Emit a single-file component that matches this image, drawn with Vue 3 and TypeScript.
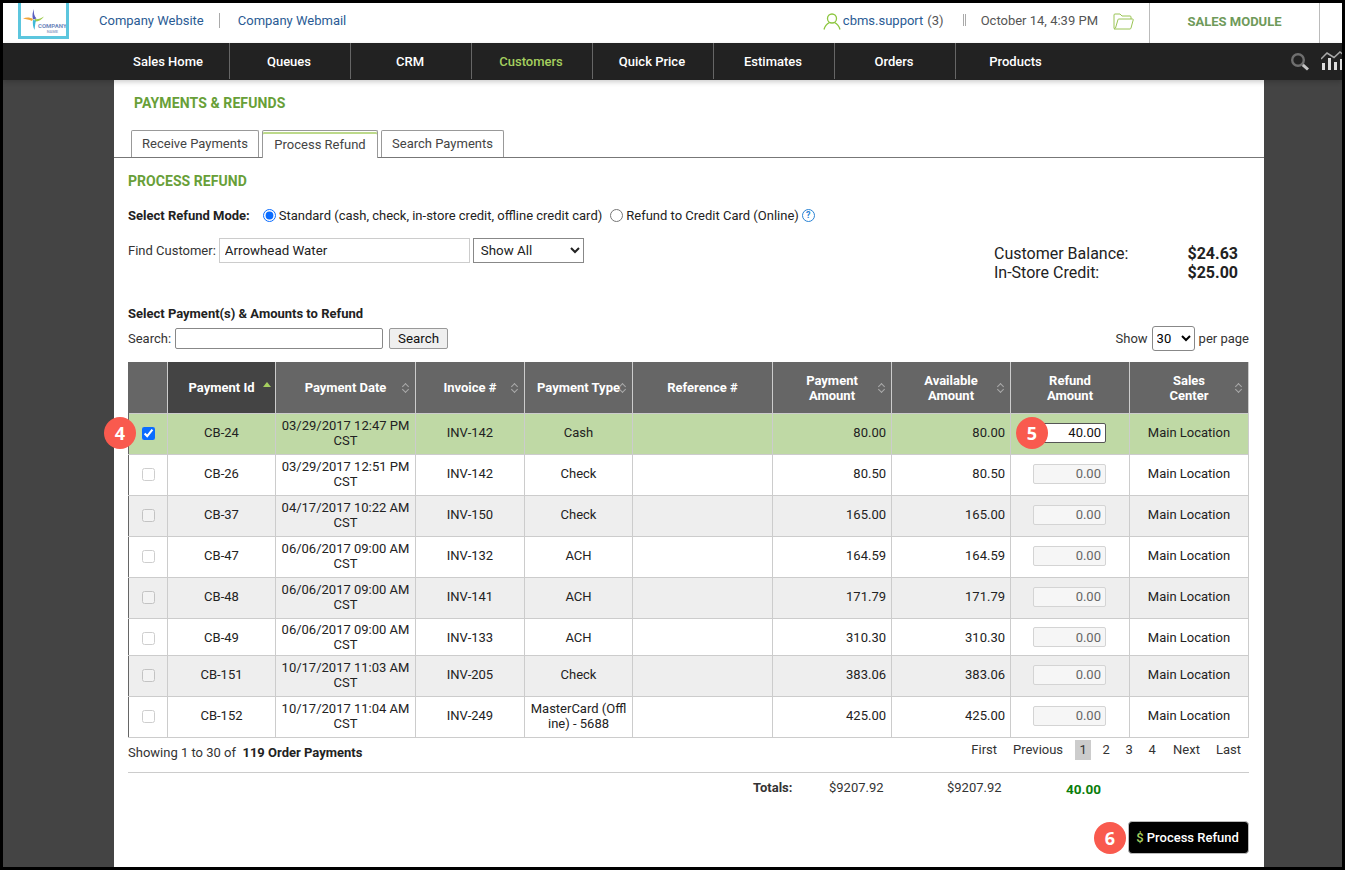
<script setup lang="ts">
interface Row {
  id: string
  date: string
  inv: string
  type: string
  amount: string
  short?: boolean
}
const nav: string[] = ['Sales Home', 'Queues', 'CRM', 'Customers', 'Quick Price', 'Estimates', 'Orders', 'Products']
const rows: Row[] = [
  { id: 'CB-24', date: '03/29/2017 12:47 PM CST', inv: 'INV-142', type: 'Cash', amount: '80.00' },
  { id: 'CB-26', date: '03/29/2017 12:51 PM CST', inv: 'INV-142', type: 'Check', amount: '80.50' },
  { id: 'CB-37', date: '04/17/2017 10:22 AM CST', inv: 'INV-150', type: 'Check', amount: '165.00' },
  { id: 'CB-47', date: '06/06/2017 09:00 AM CST', inv: 'INV-132', type: 'ACH', amount: '164.59' },
  { id: 'CB-48', date: '06/06/2017 09:00 AM CST', inv: 'INV-141', type: 'ACH', amount: '171.79' },
  { id: 'CB-49', date: '06/06/2017 09:00 AM CST', inv: 'INV-133', type: 'ACH', amount: '310.30', short: true },
  { id: 'CB-151', date: '10/17/2017 11:03 AM CST', inv: 'INV-205', type: 'Check', amount: '383.06' },
  { id: 'CB-152', date: '10/17/2017 11:04 AM CST', inv: 'INV-249', type: 'MasterCard (Offl ine) - 5688', amount: '425.00' },
]
const pages: string[] = ['1', '2', '3', '4']
</script>

<template>
  <div class="frame">
    <header class="top">
      <div class="logo">
        <svg width="22" height="22" viewBox="0 0 22 22" class="logo-mark">
          <path d="M11 0 C10.500 4 11 7 13.500 9.500 L10 10.500 C9 7 9.500 3 11 0 Z" fill="#5a5fc0" />
          <path d="M0 9.500 C3 8 7 8 10 10 L9 12 C6 10.500 3 10 0 9.500 Z" fill="#f2a63c" />
          <path d="M21 7.500 C18 9.500 15 10.500 11.500 10 L12 12.500 C15.500 12.500 19 10.500 21 7.500 Z" fill="#9ccb4a" />
          <path d="M10 11 L13 11.500 C12 15 12 18 11.500 21 C10 18 9.500 14.500 10 11 Z" fill="#3fb8d8" />
        </svg>
        <span class="logo-text">COMPANY<br /><small>NAME</small></span>
      </div>
      <a class="link first">Company Website</a>
      <span class="vsep"></span>
      <a class="link">Company Webmail</a>
      <div class="top-right">
        <svg class="user" width="18" height="17" viewBox="0 0 18 17" fill="none" stroke="#8cc63f" stroke-width="1.300">
          <circle cx="9" cy="5.500" r="4.500" />
          <path d="M1 16.500 C2 12.500 4.500 10.500 6.500 9.500 M17 16.500 C16 12.500 13.500 10.500 11.500 9.500" />
        </svg>
        <a class="link user-name">cbms.support</a>
        <span class="count">(3)</span>
        <span class="dbl"></span>
        <span class="when">October 14, 4:39 PM</span>
        <svg class="folder" width="21" height="17" viewBox="0 0 21 17" fill="none" stroke="#9ac455" stroke-width="1">
          <path d="M1 15.500 V2 Q1 1 2 1 H7 L9 3 H17 Q18 3 18 4 V6" />
          <path d="M1 15.500 Q2 15.500 2.500 15 L5 6.500 Q5 6 6 6 H19.500 Q20.500 6 20.200 7 L18 15 Q17.800 16 17 16 H1" />
        </svg>
        <div class="module">SALES MODULE</div>
      </div>
    </header>

    <nav class="nav">
      <a v-for="(n, i) in nav" :key="n" class="nav-item" :class="{ active: i === 3 }">{{ n }}</a>
      <div class="nav-icons">
        <svg width="20" height="20" viewBox="0 0 20 20" fill="none" class="ic-search">
          <circle cx="8" cy="8" r="5.800" stroke="#6f6f6f" stroke-width="2.400" />
          <path d="M12.800 12.800 L18 17.500" stroke="#c4c4c4" stroke-width="3" />
        </svg>
        <svg width="24" height="20" viewBox="0 0 24 20" class="ic-chart">
          <path d="M0 8 L6 2 L13 6.500 L19 1 L24 5" fill="none" stroke="#a8a8a8" stroke-width="1.500" />
          <rect x="1" y="12" width="3" height="7" fill="#ddd" />
          <rect x="7" y="7" width="3" height="12" fill="#ddd" />
          <rect x="13" y="11" width="3" height="8" fill="#ddd" />
          <rect x="19" y="8" width="3" height="11" fill="#ddd" />
        </svg>
      </div>
    </nav>

    <main class="page">
      <h1 class="title">PAYMENTS &amp; REFUNDS</h1>
      <div class="tabs">
        <a class="tab">Receive Payments</a>
        <a class="tab on">Process Refund</a>
        <a class="tab">Search Payments</a>
      </div>

      <section class="body">
        <h2 class="sub">PROCESS REFUND</h2>
        <div class="mode">
          <b class="mode-label">Select Refund Mode:</b>
          <input type="radio" name="mode" class="radio" checked />
          <span>Standard (cash, check, in-store credit, offline credit card)</span>
          <input type="radio" name="mode" class="radio second" />
          <span>Refund to Credit Card (Online)</span>
          <span class="help">?</span>
        </div>

        <div class="find">
          <div class="find-left">
            <label>Find Customer:</label>
            <input class="cust" value="Arrowhead Water" />
            <select class="showall"><option>Show All</option></select>
          </div>
          <div class="balance">
            <div class="bal-row"><span>Customer Balance:</span><b>$24.63</b></div>
            <div class="bal-row"><span>In-Store Credit:</span><b>$25.00</b></div>
          </div>
        </div>

        <b class="select-label">Select Payment(s) &amp; Amounts to Refund</b>
        <div class="searchbar">
          <div class="searchbar-left">
            <label>Search:</label>
            <input class="q" />
            <button class="q-btn">Search</button>
          </div>
          <div class="perpage">
            <span>Show</span>
            <select class="pp"><option>30</option></select>
            <span>per page</span>
          </div>
        </div>

        <table class="grid">
          <colgroup>
            <col class="c39" /><col class="c108" /><col class="c140" /><col class="c109" /><col class="c108" />
            <col class="c140" /><col class="c119" /><col class="c119" /><col class="c119" /><col class="c119" />
          </colgroup>
          <thead>
            <tr>
              <th></th>
              <th class="sorted">Payment Id<span class="up"></span></th>
              <th>Payment Date<span class="sort"></span></th>
              <th>Invoice #<span class="sort"></span></th>
              <th>Payment Type<span class="sort"></span></th>
              <th>Reference #</th>
              <th>Payment<br />Amount<span class="sort"></span></th>
              <th>Available<br />Amount<span class="sort"></span></th>
              <th>Refund<br />Amount</th>
              <th>Sales<br />Center<span class="sort"></span></th>
            </tr>
          </thead>
          <tbody>
            <tr v-for="(r, i) in rows" :key="r.id" :class="{ sel: i === 0, alt: i > 0 && i % 2 === 0, short: r.short }">
              <td class="chk">
                <span v-if="i === 0" class="badge b4">4</span>
                <input type="checkbox" :checked="i === 0" :class="{ off: i !== 0 }" />
              </td>
              <td>{{ r.id }}</td>
              <td class="date">{{ r.date }}</td>
              <td>{{ r.inv }}</td>
              <td class="type">{{ r.type }}</td>
              <td></td>
              <td class="num">{{ r.amount }}</td>
              <td class="num">{{ r.amount }}</td>
              <td class="refund">
                <span v-if="i === 0" class="badge b5">5</span>
                <input class="amt" :class="{ live: i === 0 }" :value="i === 0 ? '40.00' : '0.00'" />
              </td>
              <td>Main Location</td>
            </tr>
          </tbody>
        </table>

        <div class="below">
          <div class="showing">Showing 1 to 30 of &nbsp;<b>119 Order Payments</b></div>
          <div class="pager">
            <a class="p-first">First</a>
            <a class="p-prev">Previous</a>
            <a v-for="(p, i) in pages" :key="p" class="pg" :class="{ cur: i === 0 }">{{ p }}</a>
            <a class="p-next">Next</a>
            <a class="p-last">Last</a>
          </div>
        </div>

        <div class="totals">
          <b class="t-label">Totals:</b>
          <span class="t-a">$9207.92</span>
          <span class="t-b">$9207.92</span>
          <b class="t-c">40.00</b>
        </div>

        <div class="actions">
          <button class="process">
            <span class="badge b6">6</span>
            <span class="dollar">$</span> Process Refund
          </button>
        </div>
      </section>
    </main>
  </div>
</template>

<style>
html, body { margin: 0; background: #000; overflow: hidden; }
</style>

<style scoped>
.frame {
  box-sizing: border-box;
  width: 1345px;
  height: 870px;
  border: 3px solid #000;
  background: #444;
  overflow: hidden;
  font-family: Roboto, "Liberation Sans", sans-serif;
  font-size: 13px;
  color: #222;
  display: flex;
  flex-direction: column;
}
.top {
  height: 40px;
  flex: none;
  background: #fff;
  display: flex;
  align-items: center;
  padding-left: 15px;
}
.logo {
  box-sizing: border-box;
  width: 51px;
  height: 36px;
  align-self: flex-start;
  border: 3px solid #5cc6de;
  border-top: 0;
  display: flex;
  align-items: center;
  padding-left: 2px;
  background: #fff;
  white-space: nowrap;
  overflow: hidden;
}
.logo-mark { flex: none; margin-top: 1px; }
.logo-text {
  font-size: 6px;
  line-height: 5px;
  color: #7088bd;
  font-weight: 700;
  text-align: center;
  margin-left: -7px;
  margin-top: 18px;
}
.logo-text small { font-size: 4px; color: #9aa8cc; }
.link { color: #2a5b94; font-size: 13px; margin-bottom: 6px; }
.first { margin-left: 30px; }
.vsep { width: 1px; height: 15px; background: #aaa; margin: 0 18px 6px 15px; }
.top-right { margin-left: auto; display: flex; align-items: center; height: 100%; color: #555; }
.user { margin-right: 1px; margin-bottom: 4px; }
.user-name { margin-left: 1px; }
.count { margin-left: 4px; color: #555; margin-bottom: 6px; }
.dbl { width: 3px; height: 12px; border-left: 1px solid #aaa; border-right: 1px solid #aaa; margin: 0 15px 6px 19px; box-sizing: border-box; }
.when { margin-bottom: 6px; }
.folder { margin-left: 15px; margin-bottom: 3px; }
.module {
  box-sizing: border-box;
  width: 171px;
  height: 100%;
  margin-left: 15px;
  margin-right: 22px;
  border-left: 1px solid #bbb;
  border-right: 1px solid #bbb;
  display: flex;
  align-items: center;
  justify-content: center;
  color: #6f9a5a;
  font-weight: 700;
  font-size: 13px;
  padding-bottom: 4px;
}
.nav {
  height: 37px;
  flex: none;
  background: #222;
  display: flex;
  padding-left: 106px;
  position: relative;
  z-index: 1;
  box-shadow: 0 2px 5px rgba(0, 0, 0, .2);
}
.nav-item {
  box-sizing: border-box;
  width: 121px;
  height: 36px;
  display: flex;
  align-items: center;
  justify-content: center;
  color: #fff;
  font-size: 13px;
  font-weight: 500;
  border-right: 1px solid #666;
  padding: 1px 2px 0 0;
}
.nav-item:last-of-type { border-right: 0; }
.nav-item.active { color: #a5cf5f; }
.nav-icons { margin-left: auto; display: flex; align-items: center; overflow: hidden; width: 52px; gap: 11px; }
.ic-search { flex: none; }
.ic-chart { flex: none; margin-top: -2px; }
.page {
  width: 1150px;
  margin-left: 111px;
  flex: 1;
  background: #fff;
  min-height: 0;
}
.title {
  margin: 0;
  padding: 15px 0 0 20px;
  height: 35px;
  box-sizing: border-box;
  line-height: 16px;
  font-size: 14px;
  font-weight: 700;
  color: #689f38;
  letter-spacing: .1px;
}
.tabs {
  margin-top: 15px;
  height: 28px;
  box-sizing: border-box;
  padding-left: 17px;
  display: flex;
  gap: 3px;
  border-bottom: 1px solid #777;
  align-items: flex-start;
}
.tab {
  box-sizing: border-box;
  height: 27px;
  border: 1px solid #999;
  border-bottom: 0;
  border-radius: 2px 2px 0 0;
  padding: 0 10px;
  color: #444;
  line-height: 26px;
  background: #fff;
  width: 128px;
  text-align: center;
}
.tab:nth-child(2) { width: 116px; }
.tab:nth-child(3) { width: 123px; }
.tab.on {
  height: 28px;
  line-height: 27px;
  box-shadow: inset 0 1px 0 #fff, inset 0 3px 0 #bcd98a;
}
.body { padding: 0 15px 0 14px; }
.sub {
  margin: 15px 0 0;
  font-size: 14px;
  line-height: 16px;
  font-weight: 700;
  color: #689f38;
  letter-spacing: .05px;
}
.mode {
  margin-top: 17px;
  height: 18px;
  display: flex;
  align-items: center;
  white-space: nowrap;
}
.mode-label { font-weight: 700; margin-right: 13px; font-size: 13px; }
.radio { margin: 0 3px 0 0; width: 13px; height: 13px; accent-color: #0a6cff; }
.radio.second { margin-left: 8px; }
.help {
  width: 11px; height: 11px; border: 1px solid #2a83d4; border-radius: 50%;
  color: #2a83d4; font-size: 9px; line-height: 11px; text-align: center; margin-left: 3px; font-weight: 700;
}
.find {
  margin-top: 14px;
  display: flex;
  justify-content: space-between;
  align-items: flex-start;
  height: 62px;
}
.find-left { display: flex; align-items: center; }
.find-left label { margin-right: 3px; color: #333; }
.cust {
  box-sizing: border-box; width: 251px; height: 25px; border: 1px solid #ccc; padding: 0 5px;
  font: 13.330px Roboto, sans-serif; color: #222; outline: none;
}
.showall {
  box-sizing: border-box; width: 111px; height: 25px; margin-left: 3px; border: 1px solid #888; background: #fff;
  font: 13.330px Roboto, sans-serif; color: #222; padding-left: 3px;
}
.balance { width: 255px; margin-top: 6px; font-size: 16px; line-height: 19px; padding-right: 11px; box-sizing: border-box; color: #222; }
.bal-row { display: flex; justify-content: space-between; }
.bal-row b { font-weight: 700; }
.select-label { display: block; font-weight: 700; font-size: 13px; line-height: 16px; margin-top: 6px; }
.searchbar {
  margin-top: 5px; height: 22px; display: flex; justify-content: space-between; align-items: center;
}
.searchbar-left { display: flex; align-items: center; }
.searchbar-left label { margin-right: 4px; color: #333; }
.q { box-sizing: border-box; width: 208px; height: 21px; border: 1px solid #888; border-radius: 2px; outline: none; }
.q-btn {
  box-sizing: border-box; width: 59px; height: 21px; margin-left: 6px; border: 1px solid #999; border-radius: 2px;
  background: #efefef; font: 13.330px Roboto, sans-serif; color: #111; padding: 0;
}
.perpage { display: flex; align-items: center; gap: 4px; color: #333; }
.pp { box-sizing: border-box; width: 43px; height: 25px; border: 1px solid #888; border-radius: 3px; background: #fff; font: 13px Roboto, sans-serif; }
.grid {
  margin-top: 13px;
  width: 1120px;
  table-layout: fixed;
  border-collapse: collapse;
  color: #222;
  text-align: center;
}
.c39 { width: 39px; }
.c108 { width: 108px; }
.c140 { width: 140px; }
.c109 { width: 109px; }
.c119 { width: 119px; }
.grid th {
  height: 51px;
  padding: 1px 4px 0;
  box-sizing: border-box;
  position: relative;
  background: #666;
  color: #fff;
  font-size: 13px;
  line-height: 15px;
  font-weight: 700;
  border-left: 1px solid #ccc;
  border-right: 1px solid #ccc;
}
.grid th:first-child { border-left-color: #666; }
.grid th.sorted { background: #444; }
.sort, .up { position: absolute; right: 5px; top: 20px; width: 9px; height: 12px; }
.sort::before, .sort::after {
  content: ""; position: absolute; left: 2px; width: 4px; height: 4px; border-left: 1px solid #aaa; border-top: 1px solid #aaa;
}
.sort::before { top: 2px; transform: rotate(45deg); }
.sort::after { top: 5px; transform: rotate(225deg); }
.up { right: 4px; top: 20px; width: 0; height: 0; border-left: 4px solid transparent; border-right: 4px solid transparent; border-bottom: 5px solid #a5cf5f; }
.grid td {
  height: 41px;
  box-sizing: border-box;
  padding: 0 5px 2px;
  border: 1px solid #ccc;
  font-size: 13px;
  line-height: 15px;
  position: relative;
}
.grid tr.short td { height: 37px; padding-top: 1px; padding-bottom: 0; }
.grid tr.alt td { background: #eee; }
.grid tr.sel td { background: #bfd9a5; }
.grid td:first-child { border-left-color: #666; }
.date { padding-left: 2px !important; padding-right: 2px !important; }
.type { word-break: break-all; }
.num { text-align: right; }
.chk input { margin: 0; width: 13px; height: 13px; vertical-align: middle; accent-color: #0a6cff; }
.chk input.off { opacity: .35; }
.refund { text-align: right; padding-right: 23px !important; }
.amt {
  box-sizing: border-box; width: 73px; height: 20px; border: 1px solid #d4d4d4; border-radius: 2px; background: #f6f6f6;
  text-align: right; padding: 0 4px; color: #666; font: 13px Roboto, sans-serif; outline: none; vertical-align: middle;
}
.amt.live { background: #fff; color: #111; border-color: #555; }
.badge {
  position: absolute; width: 32px; height: 32px; border-radius: 50%; background: #f95a4e; color: #fff;
  font: 700 18px/32px "Open Sans", "Liberation Sans", sans-serif; text-align: center; z-index: 2;
}
.b4 { left: -25px; top: 3px; }
.b5 { left: 5px; top: 3px; }
.b6 { left: -35px; top: 0; }
.below { display: flex; justify-content: space-between; height: 35px; box-sizing: border-box; border-bottom: 1px solid #ccc; }
.showing { margin-top: 7px; line-height: 16px; color: #333; }
.showing b { color: #222; }
.pager { display: flex; align-items: center; height: 20px; margin-top: 2px; margin-right: 8px; color: #333; }
.p-prev { margin-left: 16px; }
.pg { width: 16px; margin-left: 7px; text-align: center; line-height: 20px; }
.pg.cur { margin-left: 12px; background: #ccc; }
.p-next { margin-left: 13px; }
.p-last { margin-left: 16px; }
.totals { position: relative; height: 30px; color: #333; line-height: 16px; }
.totals > * { position: absolute; top: 7px; }
.t-label { left: 625px; font-weight: 700; font-size: 13px; }
.t-a { left: 701px; }
.t-b { left: 819px; }
.t-c { left: 938px; top: 8px; color: #0a7d0a; font-size: 13.500px; font-weight: 700; }
.actions { display: flex; justify-content: flex-end; margin-top: 18px; }
.process {
  position: relative;
  box-sizing: border-box; width: 121px; height: 33px; background: #000; color: #fff; border: 1px solid #bbb; border-radius: 4px;
  font: 500 13px Roboto, sans-serif; padding: 0 2px 0 0;
}
.dollar { color: #a5cf5f; }
</style>
